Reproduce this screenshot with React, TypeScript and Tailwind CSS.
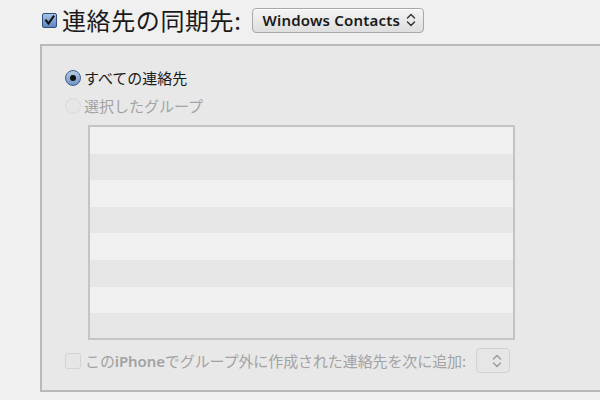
const jp = { fontFamily: '"Noto Sans CJK JP", "Noto Sans", sans-serif' };

function UpDown({ className }: { className?: string }) {
  return (
    <svg width="10" height="14" viewBox="0 0 10 14" className={className} fill="none" stroke="currentColor" strokeWidth="1.4" strokeLinecap="round" strokeLinejoin="round">
      <path d="M1.5 5 L5 1.5 L8.5 5" />
      <path d="M1.5 9 L5 12.5 L8.5 9" />
    </svg>
  );
}

export default function App() {
  const rows = [0, 1, 2, 3, 4, 5, 6, 7];
  return (
    <div className="w-[600px] h-[400px] overflow-hidden bg-[#f0f0f0]" style={jp}>
      {/* header */}
      <div className="flex items-center h-[44px] pl-[42px] pb-[4px]">
        <span className="flex items-center justify-center w-[15px] h-[15px] rounded-[2px] border border-[#2f4f7a] bg-gradient-to-b from-[#a9c3e6] to-[#5c84bd]">
          <svg width="11" height="11" viewBox="0 0 11 11" fill="none" stroke="#111" strokeWidth="2" strokeLinecap="square">
            <path d="M2 5.5 L4.5 8.5 L9.5 1.5" />
          </svg>
        </span>
        <span className="ml-[5px] text-[24px] leading-none text-[#1a1a1a] tracking-[0.6px]">連絡先の同期先:</span>
        <button className="ml-[11px] flex items-center h-[25px] w-[172px] rounded-[4px] border border-[#a8a8a8] bg-gradient-to-b from-[#f4f4f4] to-[#dedede] pl-[9px] pr-[7px] shadow-[inset_0_1px_0_#fff]">
          <span className="text-[15px] font-semibold text-[#1a1a1a] leading-none tracking-[0.2px] whitespace-nowrap" style={{ fontFamily: '"Noto Sans", "Open Sans", sans-serif' }}>Windows Contacts</span>
          <UpDown className="ml-auto shrink-0 text-[#333]" />
        </button>
      </div>

      {/* panel */}
      <div className="ml-[40px] w-[580px] h-[348px] border-l-2 border-t-2 border-b-2 border-[#b9b9b9] bg-[#e8e8e8] pt-[23px] pl-[23px]">
        <div className="flex items-center h-[17px]">
          <span className="flex items-center justify-center w-[16px] h-[16px] rounded-full border border-[#3e5f8a] bg-gradient-to-b from-[#b6cbe6] to-[#6f94c4]">
            <span className="w-[6px] h-[6px] rounded-full bg-[#111]" />
          </span>
          <span className="ml-[3px] text-[15px] leading-none text-[#1a1a1a]">すべての連絡先</span>
        </div>
        <div className="flex items-center h-[17px] mt-[11px]">
          <span className="w-[16px] h-[16px] rounded-full border border-[#dadada] bg-[#e6e6e6]" />
          <span className="ml-[3px] text-[15px] leading-none text-[#a3a3a3]">選択したグループ</span>
        </div>

        <div className="ml-[23px] mt-[11px] w-[427px] h-[215px] border-2 border-[#c4c4c4] flex flex-col overflow-hidden">
          {rows.map((r) => (
            <div key={r} className={`h-[26.6px] shrink-0 ${r % 2 === 0 ? "bg-[#f0f0f0]" : "bg-[#e6e6e6]"}`} />
          ))}
        </div>

        <div className="flex items-center mt-[8px] h-[25px]">
          <span className="w-[16px] h-[16px] rounded-[3px] border border-[#d4d4d4] bg-[#e6e6e6]" />
          <span className="ml-[4px] text-[15px] leading-none text-[#a3a3a3] tracking-[-0.1px]">
            この<span style={{ fontFamily: '"Noto Sans", sans-serif' }} className="font-semibold">iPhone</span>でグループ外に作成された連絡先を次に追加:
          </span>
          <button className="ml-[10px] flex items-center justify-end w-[34px] h-[25px] rounded-[4px] border border-[#d2d2d2] bg-[#e6e6e6] pr-[7px]">
            <UpDown className="text-[#999]" />
          </button>
        </div>
      </div>
    </div>
  );
}
